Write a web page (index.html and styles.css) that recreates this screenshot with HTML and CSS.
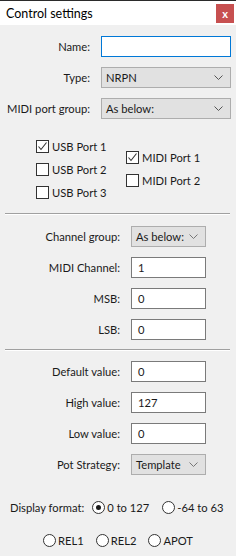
FILE: index.html
```html
<!DOCTYPE html>
<html lang="en">
<head>
  <meta charset="UTF-8">
  <title>Control settings</title>
  <link rel="stylesheet" href="styles.css">
</head>
<body>
  <div class="titlebar">
    <span class="title">Control settings</span>
    <div class="close">x</div>
  </div>

  <div class="content">
    <div class="section top">
      <div class="row">
        <label class="lbl wide">Name:</label>
        <div class="input focus wide-ctl"></div>
      </div>
      <div class="row">
        <label class="lbl wide">Type:</label>
        <div class="select wide-ctl"><span>NRPN</span>
          <svg width="9" height="5" viewBox="0 0 9 5"><polyline points="0.5,0.5 4.5,4.5 8.5,0.5" fill="none" stroke="#555" stroke-width="1"/></svg>
        </div>
      </div>
      <div class="row">
        <label class="lbl wide">MIDI port group:</label>
        <div class="select wide-ctl"><span>As below:</span>
          <svg width="9" height="5" viewBox="0 0 9 5"><polyline points="0.5,0.5 4.5,4.5 8.5,0.5" fill="none" stroke="#555" stroke-width="1"/></svg>
        </div>
      </div>
    </div>

    <div class="ports">
      <div class="port-col">
        <div class="check"><span class="box"><svg width="11" height="11" viewBox="0 0 11 11"><polyline points="1.5,5.5 4,8.5 9.5,1.5" fill="none" stroke="#333" stroke-width="1.1"/></svg></span>USB Port 1</div>
        <div class="check"><span class="box"></span>USB Port 2</div>
        <div class="check"><span class="box"></span>USB Port 3</div>
      </div>
      <div class="port-col second">
        <div class="check"><span class="box"><svg width="11" height="11" viewBox="0 0 11 11"><polyline points="1.5,5.5 4,8.5 9.5,1.5" fill="none" stroke="#333" stroke-width="1.1"/></svg></span>MIDI Port 1</div>
        <div class="check"><span class="box"></span>MIDI Port 2</div>
      </div>
    </div>

    <div class="sep"></div>

    <div class="section mid first-mid">
      <div class="row">
        <label class="lbl">Channel group:</label>
        <div class="select short"><span>As below:</span>
          <svg width="9" height="5" viewBox="0 0 9 5"><polyline points="0.5,0.5 4.5,4.5 8.5,0.5" fill="none" stroke="#777" stroke-width="1"/></svg>
        </div>
      </div>
      <div class="row">
        <label class="lbl">MIDI Channel:</label>
        <div class="input short">1</div>
      </div>
      <div class="row">
        <label class="lbl">MSB:</label>
        <div class="input short">0</div>
      </div>
      <div class="row">
        <label class="lbl">LSB:</label>
        <div class="input short">0</div>
      </div>
    </div>

    <div class="sep"></div>

    <div class="section mid">
      <div class="row">
        <label class="lbl">Default value:</label>
        <div class="input short">0</div>
      </div>
      <div class="row">
        <label class="lbl">High value:</label>
        <div class="input short">127</div>
      </div>
      <div class="row">
        <label class="lbl">Low value:</label>
        <div class="input short">0</div>
      </div>
      <div class="row">
        <label class="lbl">Pot Strategy:</label>
        <div class="select short"><span>Template</span>
          <svg width="9" height="5" viewBox="0 0 9 5"><polyline points="0.5,0.5 4.5,4.5 8.5,0.5" fill="none" stroke="#777" stroke-width="1"/></svg>
        </div>
      </div>
    </div>

    <div class="format">
      <span class="format-lbl">Display format:</span>
      <div class="radio"><span class="dot on"></span>0 to 127</div>
      <div class="radio"><span class="dot"></span>-64 to 63</div>
    </div>

    <div class="modes">
      <div class="radio"><span class="dot"></span>REL1</div>
      <div class="radio"><span class="dot"></span>REL2</div>
      <div class="radio"><span class="dot"></span>APOT</div>
    </div>
  </div>
</body>
</html>
```

FILE: styles.css
```css
body {
  margin: 0;
  padding: 0;
  width: 236px;
  height: 556px;
  background: #f0f0f0;
  font-family: Lato, "Noto Sans", sans-serif;
  font-size: 11.2px;
  color: #1a1a1a;
  overflow: hidden;
}

.titlebar {
  height: 24px;
  border-top: 1px solid #2b2b2b;
  background: #fff;
  display: flex;
  align-items: center;
  justify-content: space-between;
}

.title {
  margin-left: 6px;
  font-size: 12.5px;
  color: #000;
  white-space: nowrap;
}

.close {
  width: 18px;
  height: 19px;
  margin-right: 2px;
  margin-top: 1px;
  background: #c75050;
  color: #fff;
  font-weight: bold;
  font-size: 11px;
  display: flex;
  align-items: center;
  justify-content: center;
  flex-shrink: 0;
}

.content {
  padding-top: 11px;
}

.section {
  display: flex;
  flex-direction: column;
  gap: 10px;
}

.row {
  display: flex;
  align-items: center;
}

.lbl {
  width: 120px;
  flex-shrink: 0;
  text-align: right;
  margin-right: 11px;
  white-space: nowrap;
}

.lbl.wide {
  width: 90px;
}

.input {
  flex-shrink: 0;
  height: 19px;
  border: 1px solid #7a7a7a;
  background: #fff;
  padding-left: 6px;
  line-height: 19px;
  box-sizing: content-box;
}

.input.focus {
  border-color: #0078d7;
}

.wide-ctl {
  width: 128px;
}

.input.wide-ctl {
  width: 122px;
}

.short {
  width: 67px;
}

.select {
  flex-shrink: 0;
  height: 19px;
  border: 1px solid #adadad;
  background: #e1e1e1;
  display: flex;
  align-items: center;
  justify-content: space-between;
  padding: 0 7px 0 4px;
  white-space: nowrap;
}

.select.wide-ctl {
  width: 117px;
}

.select.short {
  width: 62px;
}

.ports {
  display: flex;
  margin-top: 21px;
  margin-bottom: 14px;
  padding-left: 36px;
}

.port-col {
  display: flex;
  flex-direction: column;
  gap: 10px;
  width: 90px;
}

.port-col.second {
  margin-top: 11px;
}

.check {
  display: flex;
  align-items: center;
  height: 13px;
  white-space: nowrap;
}

.box {
  width: 11px;
  height: 11px;
  border: 1px solid #333;
  background: #fff;
  margin-right: 3px;
  display: flex;
  flex-shrink: 0;
}

.sep {
  margin: 0 6px 0 5px;
  border-top: 1px solid #a0a0a0;
  border-bottom: 1px solid #fff;
}

.mid {
  margin-top: 10px;
}

.first-mid {
  margin-top: 11px;
  margin-bottom: 9px;
}

.format {
  display: flex;
  align-items: center;
  height: 13px;
  margin-top: 26px;
  padding-left: 10px;
  white-space: nowrap;
}

.format-lbl {
  margin-right: 8px;
}

.radio {
  display: flex;
  align-items: center;
  white-space: nowrap;
  margin-right: 13px;
}

.dot {
  width: 11px;
  height: 11px;
  border: 1px solid #333;
  border-radius: 50%;
  background: #fff;
  margin-right: 2px;
  position: relative;
  flex-shrink: 0;
}

.dot.on::after {
  content: "";
  position: absolute;
  left: 3px;
  top: 3px;
  width: 5px;
  height: 5px;
  border-radius: 50%;
  background: #1a1a1a;
}

.modes {
  display: flex;
  justify-content: center;
  align-items: center;
  height: 13px;
  margin-top: 20px;
  padding-left: 12px;
}

.modes .radio {
  margin-right: 12px;
}
```
